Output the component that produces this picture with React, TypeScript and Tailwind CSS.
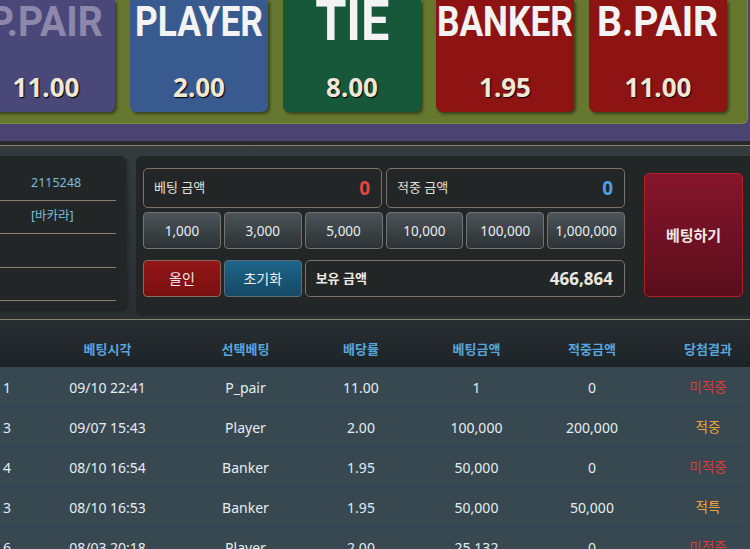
import React from "react";

const cards = [
  { title: "P.PAIR", odds: "11.00", bg: "bg-[#4a4878]", text: "text-[#8d88ab]", size: "text-[43px] leading-none", scale: "scale-x-[0.91]" },
  { title: "PLAYER", odds: "2.00", bg: "bg-[#385a8e]", text: "text-[#f3f3f3]", size: "text-[43px] leading-none", scale: "scale-x-[0.82]" },
  { title: "TIE", odds: "8.00", bg: "bg-[#17573a]", text: "text-[#f3f3f3]", size: "text-[56px] leading-[43px]", scale: "scale-x-[0.9]" },
  { title: "BANKER", odds: "1.95", bg: "bg-[#8e1313]", text: "text-[#f3f3f3]", size: "text-[43px] leading-none", scale: "scale-x-[0.82]" },
  { title: "B.PAIR", odds: "11.00", bg: "bg-[#8e1313]", text: "text-[#f3f3f3]", size: "text-[43px] leading-none", scale: "scale-x-[0.91]" },
];

const chips = ["1,000", "3,000", "5,000", "10,000", "100,000", "1,000,000"];

const infoRows = [
  { label: "회차", value: "2115248" },
  { label: "게임종류", value: "[바카라]" },
  { label: "배팅금액", value: "" },
  { label: "", value: "" },
];

const headers = ["", "베팅시각", "선택베팅", "배당률", "베팅금액", "적중금액", "당첨결과"];

const history = [
  ["1", "09/10 22:41", "P_pair", "11.00", "1", "0", "미적중"],
  ["3", "09/07 15:43", "Player", "2.00", "100,000", "200,000", "적중"],
  ["4", "08/10 16:54", "Banker", "1.95", "50,000", "0", "미적중"],
  ["3", "08/10 16:53", "Banker", "1.95", "50,000", "50,000", "적특"],
  ["6", "08/03 20:18", "Player", "2.00", "25,132", "0", "미적중"],
];

const gridCols = "grid grid-cols-[27px_161px_115px_116px_115px_116px_116px]";

function BetCard({ card }: { card: (typeof cards)[number] }) {
  return (
    <div
      className={`${card.bg} w-[138px] h-[112px] shrink-0 rounded-b-md shadow-[2px_2px_3px_rgba(0,0,0,0.45)] flex flex-col items-center overflow-hidden`}
    >
      <div className={`h-[43px] font-['Roboto'] font-bold whitespace-nowrap ${card.text} ${card.size}`}>
        <span className={`inline-block ${card.scale}`}>{card.title}</span>
      </div>
      <div className="mt-[29px] text-[26px] leading-[30px] font-bold text-[#efe8d6] [text-shadow:1px_1px_1px_#000]">
        {card.odds}
      </div>
    </div>
  );
}

export default function App() {
  return (
    <div className="w-[750px] h-[549px] overflow-hidden bg-[#374851] font-['Noto_Sans','Noto_Sans_CJK_KR',sans-serif]">
      {/* odds cards */}
      <div className="bg-[#4b4370] pb-[17px]">
        <div className="-ml-[23px] w-[771px] h-[124px] bg-[#66772f] rounded-br-md border-b border-r border-[#7b8c3b] flex gap-[15px]">
          {cards.map((c) => (
            <BetCard key={c.title} card={c} />
          ))}
        </div>
      </div>
      <div className="h-[4px] bg-[#262a29]" />

      {/* bet panel */}
      <section className="border-y border-[#8a8270] bg-gradient-to-b from-[#343c3e] to-[#2a3032] pt-[10px] pb-[3px] flex items-start gap-[10px]">
        <div className="-ml-[100px] w-[226px] shrink-0 bg-[#222626] rounded-md shadow-[1px_2px_4px_rgba(0,0,0,0.4)] pt-[11px] pb-[8px] pr-[10px]">
          {infoRows.map((r, i) => (
            <div
              key={i}
              className="h-[33.5px] flex items-center border-b border-[#8c7f6b] text-[12.5px]"
            >
              <span className="w-[131px] pl-[52px] text-[#a9a08c]">{r.label}</span>
              <span className="text-[#7cbcdd]">{r.value}</span>
            </div>
          ))}
        </div>

        <div className="w-[630px] shrink-0 bg-[#222626] rounded-md pl-[7px] pt-[12px] pb-[19px] flex items-start">
          <div className="w-[482px]">
            <div className="grid grid-cols-2 gap-[4px]">
              <div className="h-[40px] rounded-[5px] border border-[#7c7366] flex items-center justify-between pl-[10px] pr-[11px]">
                <span className="text-[13px] text-[#e2e0d8]">베팅 금액</span>
                <span className="text-[19px] font-bold text-[#e04545]">0</span>
              </div>
              <div className="h-[40px] rounded-[5px] border border-[#7c7366] flex items-center justify-between pl-[10px] pr-[11px]">
                <span className="text-[13px] text-[#e2e0d8]">적중 금액</span>
                <span className="text-[19px] font-bold text-[#4aa0e4]">0</span>
              </div>
            </div>
            <div className="grid grid-cols-6 gap-[3px] mt-[4px]">
              {chips.map((c) => (
                <button
                  key={c}
                  className="h-[37px] pt-[2px] rounded-[4px] border border-[#78736a] bg-gradient-to-b from-[#4b5459] to-[#2c3235] text-[13.5px] text-[#e8eef0]"
                >
                  {c}
                </button>
              ))}
            </div>
            <div className="grid grid-cols-6 gap-[3px] mt-[11px]">
              <button className="h-[37px] rounded-[4px] border border-[#8a6a5c] bg-gradient-to-b from-[#931616] to-[#7a1010] text-[14px] text-[#f2e9e9]">
                올인
              </button>
              <button className="h-[37px] rounded-[4px] border border-[#5d6e74] bg-gradient-to-b from-[#1d6589] to-[#164965] text-[14px] text-[#eef2f4]">
                초기화
              </button>
              <div className="col-span-4 h-[37px] rounded-[5px] border border-[#7c7366] flex items-center justify-between pl-[10px] pr-[11px]">
                <span className="text-[13px] font-bold text-[#ecebe6]">보유 금액</span>
                <span className="text-[17px] font-bold text-[#ebe8e0]">466,864</span>
              </div>
            </div>
          </div>
          <button className="ml-[19px] mt-[5px] w-[99px] h-[124px] rounded-[5px] border border-[#b81c2a] bg-gradient-to-b from-[#86152a] to-[#5a0e1c] text-[15px] font-bold text-[#f2e8e8]">
            베팅하기
          </button>
        </div>
      </section>

      {/* history table */}
      <div className={`${gridCols} h-[47px] pb-[8px] bg-gradient-to-b from-[#282d30] to-[#1d2428] items-end`}>
        {headers.map((h, i) => (
          <div key={i} className="text-center text-[13px] font-bold text-[#58a6df]">
            {h}
          </div>
        ))}
      </div>
      {history.map((row, ri) => (
        <div
          key={ri}
          className={`${gridCols} h-[40px] pt-[2px] items-center border-b border-[#2d4555] bg-[#374851] text-[14px] text-[#e5edf1]`}
        >
          {row.map((cell, ci) => {
            if (ci === 0)
              return (
                <div key={ci} className="pl-[3px]">
                  {cell}
                </div>
              );
            if (ci === 6)
              return (
                <div
                  key={ci}
                  className={`text-center text-[13.5px] ${
                    cell === "미적중" ? "text-[#e0383b]" : "text-[#f0a53a]"
                  }`}
                >
                  {cell}
                </div>
              );
            return (
              <div key={ci} className="text-center">
                {cell}
              </div>
            );
          })}
        </div>
      ))}
    </div>
  );
}
